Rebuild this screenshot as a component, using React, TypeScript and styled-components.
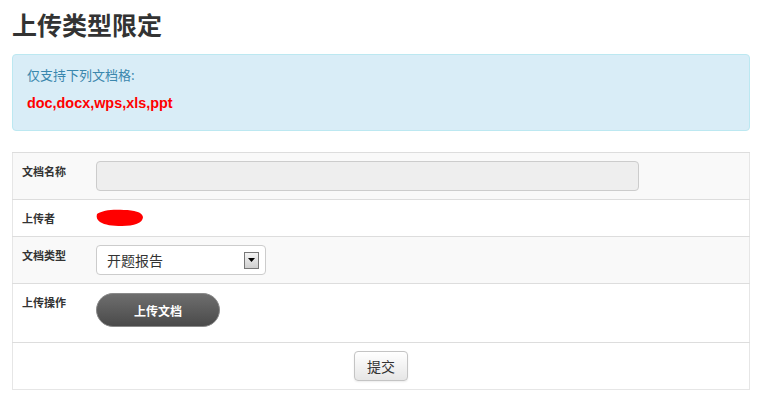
import React from "react";
import styled, { createGlobalStyle } from "styled-components";

const GlobalStyle = createGlobalStyle`
  body {
    margin: 0;
    background: #fff;
    font-family: "Noto Sans CJK SC", "Liberation Sans", sans-serif;
    color: #333;
  }
`;

const Page = styled.div`
  padding: 6px 8px 0 12px;
  width: 738px;
`;

const Title = styled.h1`
  margin: 0 0 12px;
  font-size: 25px;
  line-height: 36px;
  font-weight: bold;
  color: #333;
`;

const Alert = styled.div`
  height: 77px;
  box-sizing: border-box;
  padding: 10px 14px;
  background: #d9edf7;
  border: 1px solid #bce8f1;
  border-radius: 4px;
  color: #3a87ad;
  font-size: 13px;
`;

const AlertLine = styled.div`
  line-height: 20px;
`;

const Formats = styled.div`
  margin-top: 8px;
  color: #ff0000;
  font-family: "Liberation Sans", "Noto Sans CJK SC", sans-serif;
  font-weight: bold;
  font-size: 14.4px;
  line-height: 20px;
`;

const Table = styled.table`
  margin-top: 21px;
  width: 738px;
  border-collapse: collapse;
  border-left: 1px solid #e6e6e6;
  border-right: 1px solid #e6e6e6;
  border-bottom: 1px solid #e6e6e6;
`;

const Row = styled.tr<{ $striped?: boolean }>`
  background: ${(p) => (p.$striped ? "#f9f9f9" : "#fff")};
`;

const Label = styled.td`
  width: 60px;
  padding: 8px 6px 8px 9px;
  border-top: 1px solid #ddd;
  vertical-align: top;
  font-size: 11px;
  font-weight: bold;
  line-height: 20px;
  color: #333;
`;

const Value = styled.td<{ $pb?: number }>`
  padding: 8px 8px ${(p) => p.$pb ?? 8}px;
  border-top: 1px solid #ddd;
  vertical-align: top;
  line-height: 20px;
`;

const Center = styled.td`
  padding: 8px;
  border-top: 1px solid #ddd;
  text-align: center;
`;

const TextInput = styled.div`
  width: 543px;
  height: 30px;
  box-sizing: border-box;
  background: #eee;
  border: 1px solid #ccc;
  border-radius: 4px;
`;

const Scribble = styled.svg`
  display: block;
`;

const Select = styled.div`
  width: 170px;
  height: 30px;
  box-sizing: border-box;
  display: flex;
  align-items: center;
  justify-content: space-between;
  padding: 0 6px 0 10px;
  background: #fff;
  border: 1px solid #ccc;
  border-radius: 4px;
  font-size: 14px;
  color: #333;
`;

const Arrow = styled.span`
  width: 15px;
  height: 17px;
  box-sizing: border-box;
  border: 1px solid #777;
  background: linear-gradient(#f4f4f4, #cfcfcf);
  display: flex;
  align-items: center;
  justify-content: center;
`;

const UploadButton = styled.button`
  width: 124px;
  height: 34px;
  margin-top: 1px;
  margin-bottom: 7px;
  border: 1px solid #8a8a8a;
  border-radius: 17px;
  background: linear-gradient(#6e6e6e, #4a4a4a);
  color: #fff;
  font-family: inherit;
  font-size: 12px;
  font-weight: bold;
  cursor: pointer;
`;

const SubmitButton = styled.button`
  width: 54px;
  height: 30px;
  border: 1px solid #c4c4c4;
  border-radius: 4px;
  background: linear-gradient(#ffffff, #e6e6e6);
  box-shadow: 0 1px 2px rgba(0, 0, 0, 0.08);
  color: #333;
  font-family: inherit;
  font-size: 14px;
  cursor: pointer;
`;

const App = () => {
  return (
    <Page>
      <GlobalStyle />
      <Title>上传类型限定</Title>
      <Alert>
        <AlertLine>仅支持下列文档格:</AlertLine>
        <Formats>doc,docx,wps,xls,ppt</Formats>
      </Alert>

      <Table>
        <tbody>
          <Row $striped>
            <Label>文档名称</Label>
            <Value>
              <TextInput />
            </Value>
          </Row>
          <Row>
            <Label>上传者</Label>
            <Value>
              <Scribble width="48" height="20" viewBox="0 0 48 20">
                <path
                  d="M1 6 C6 2 18 1 28 2 C38 2 46 4 47 9 C47 15 38 18 26 18 C16 18 9 17 4 14 C1 12 0 9 1 6 Z"
                  fill="#ff0000"
                />
              </Scribble>
            </Value>
          </Row>
          <Row $striped>
            <Label>文档类型</Label>
            <Value>
              <Select>
                开题报告
                <Arrow>
                  <svg width="7" height="4" viewBox="0 0 7 4">
                    <path d="M0 0 H7 L3.5 4 Z" fill="#000" />
                  </svg>
                </Arrow>
              </Select>
            </Value>
          </Row>
          <Row>
            <Label>上传操作</Label>
            <Value>
              <UploadButton>上传文档</UploadButton>
            </Value>
          </Row>
          <Row>
            <Center colSpan={2}>
              <SubmitButton>提交</SubmitButton>
            </Center>
          </Row>
        </tbody>
      </Table>
    </Page>
  );
};

export default App;
